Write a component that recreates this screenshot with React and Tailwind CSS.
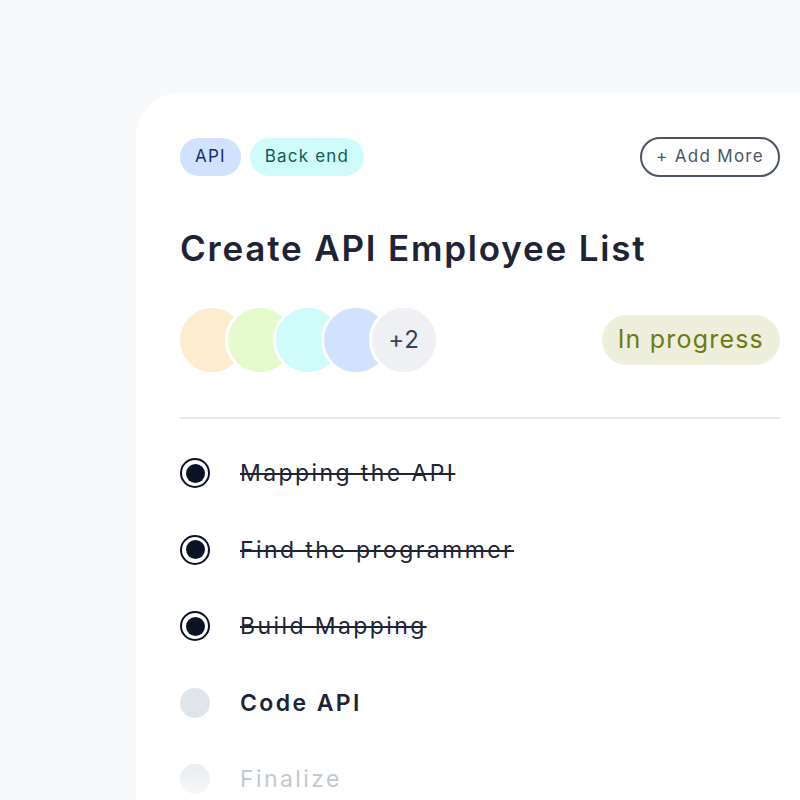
const tasks = [
  { name: 'Mapping the API', state: 'done' },
  { name: 'Find the programmer', state: 'done' },
  { name: 'Build Mapping', state: 'done' },
  { name: 'Code API', state: 'current' },
  { name: 'Finalize', state: 'todo' },
]

const avatars = ['bg-[#feeccf]', 'bg-[#e6fbcd]', 'bg-[#cffcfb]', 'bg-[#d0e2fd]']

function TaskIcon({ state }) {
  if (state === 'done') {
    return (
      <span className="w-[30px] h-[30px] rounded-full border-2 border-[#0b1226] flex items-center justify-center shrink-0">
        <span className="w-[19px] h-[19px] rounded-full bg-[#0b1226]" />
      </span>
    )
  }
  if (state === 'current') {
    return <span className="w-[30px] h-[30px] rounded-full bg-[#e0e5eb] shrink-0" />
  }
  return <span className="w-[30px] h-[30px] rounded-full bg-gradient-to-b from-[#e8ecf0] to-[#f7f8fa] shrink-0" />
}

export default function App() {
  return (
    <div
      className="w-[800px] h-[800px] overflow-hidden bg-[#f8f9fb] pl-[136px] pt-[93px]"
      style={{ fontFamily: 'Inter, "Noto Sans", sans-serif' }}
    >
      <div className="w-[688px] h-[760px] bg-white rounded-tl-[44px] px-[44px] pt-[44px]">
        <div className="flex items-center justify-between">
          <div className="flex gap-[9px]">
            <span className="h-[38px] px-[15px] rounded-full bg-[#d0e2fd] text-[#1b2f63] text-[17px] tracking-[1.2px] flex items-center">
              API
            </span>
            <span className="h-[38px] px-[15px] rounded-full bg-[#cffcfb] text-[#0f5d55] text-[17px] tracking-[1.2px] flex items-center">
              Back end
            </span>
          </div>
          <button className="h-[40px] px-[14px] rounded-full border-2 border-[#4b5563] text-[#4b5563] text-[17px] tracking-[1.3px] flex items-center">
            + Add More
          </button>
        </div>

        <h1 className="mt-[47px] text-[35px] leading-[48px] font-semibold tracking-[1.8px] text-[#1e2435]">
          Create API Employee List
        </h1>

        <div className="mt-[33px] flex items-center justify-between">
          <div className="flex">
            {avatars.map((c, i) => (
              <span
                key={i}
                className={`w-[70px] h-[70px] rounded-full border-[3px] border-white ${c} ${i === 0 ? '-ml-[3px]' : '-ml-[22px]'}`}
              />
            ))}
            <span className="w-[70px] h-[70px] -ml-[22px] rounded-full border-[3px] border-white bg-[#eef0f4] text-[#394150] text-[24px] tracking-[1px] flex items-center justify-center">
              +2
            </span>
          </div>
          <span className="h-[50px] px-[16px] rounded-full bg-[#eeeedd] text-[#6f7b12] text-[25px] tracking-[1.2px] flex items-center">
            In progress
          </span>
        </div>

        <div className="mt-[42px] border-t-2 border-[#e8e8ea]" />

        <ul className="mt-[16px]">
          {tasks.map((t) => (
            <li key={t.name} className="h-[76.5px] flex items-center gap-[30px]">
              <TaskIcon state={t.state} />
              <span
                className={`text-[23px] tracking-[2.4px] ${
                  t.state === 'done'
                    ? 'line-through text-[#1e2435] decoration-[1.5px]'
                    : t.state === 'current'
                    ? 'font-semibold text-[#1e2435]'
                    : 'text-[#c3c9d0]'
                }`}
              >
                {t.name}
              </span>
            </li>
          ))}
        </ul>
      </div>
    </div>
  )
}
